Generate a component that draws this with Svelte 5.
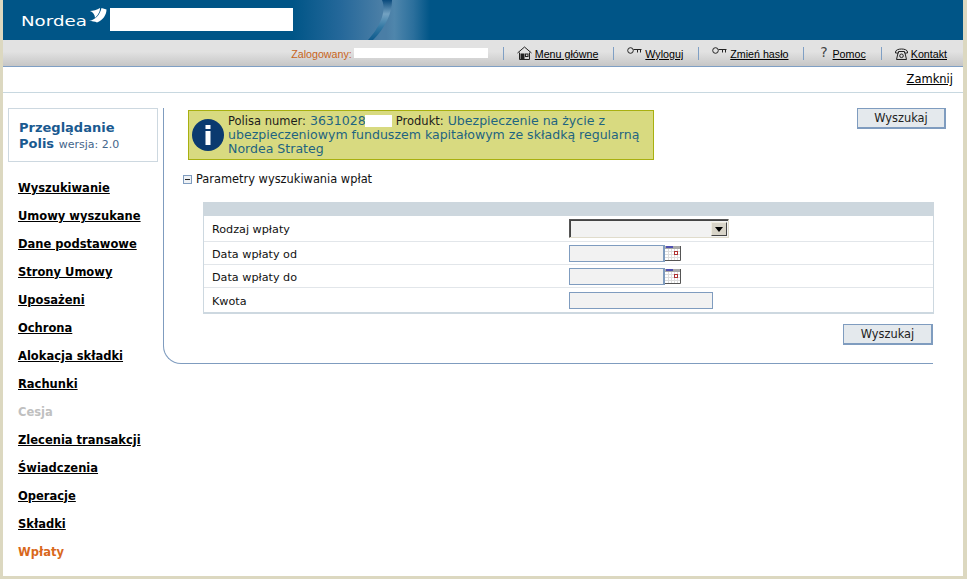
<script>
  const links = [
    { label: 'Menu główne', icon: 'home' },
    { label: 'Wyloguj', icon: 'key' },
    { label: 'Zmień hasło', icon: 'key' },
    { label: 'Pomoc', icon: 'help' },
    { label: 'Kontakt', icon: 'phone' }
  ];
  const menu = [
    'Wyszukiwanie', 'Umowy wyszukane', 'Dane podstawowe', 'Strony Umowy', 'Uposażeni',
    'Ochrona', 'Alokacja składki', 'Rachunki', 'Cesja', 'Zlecenia transakcji',
    'Świadczenia', 'Operacje', 'Składki', 'Wpłaty'
  ];
</script>

<div class="page">
  <header class="banner">
    <div class="logo">
      <span class="logo-text">Nordea</span>
      <svg class="sail" width="18" height="15" viewBox="0 0 18 15">
        <path d="M1 3 C4 3 8 2 11 0 C11 3 10 6 6 10 C6 7 4 4 1 3Z" fill="#fff" />
        <path d="M12.5 0 L17.5 1.5 C17.5 7 14 12 8 14.5 C6 13.5 3 13 0 13 C6 12 11 7 12.5 0Z" fill="#fff" />
      </svg>
    </div>
    <div class="blank-name"></div>
    <div class="swoosh">
      <svg width="137" height="40" viewBox="0 0 137 40">
        <defs>
          <linearGradient id="curve" x1="0" y1="0" x2="0" y2="1">
            <stop offset="0" stop-color="#0a4a7c" />
            <stop offset="0.35" stop-color="#74a2c2" />
            <stop offset="0.7" stop-color="#2f76a2" />
            <stop offset="1" stop-color="#0f5a8c" />
          </linearGradient>
        </defs>
        <path d="M89 0 L99 0 C99 14 92 28 80 40 L75 40 C86 28 94 12 89 0Z" fill="url(#curve)" />
      </svg>
    </div>
  </header>

  <nav class="topbar">
    <span class="user">Zalogowany:</span>
    <span class="blank-user"></span>
    {#each links as link}
      <span class="sep"></span>
      <span class="top-item">
        {#if link.icon === 'home'}
          <svg width="15" height="14" viewBox="0 0 15 14" fill="none" stroke="#222" stroke-width="1">
            <path d="M0.5 7 L7.5 1 L14.5 7" />
            <path d="M2.5 6.5 V13.5 H12.5 V6.5" />
            <rect x="4" y="8" width="3" height="5.5" fill="#222" />
            <rect x="8.5" y="8" width="2.5" height="2.5" />
          </svg>
        {:else if link.icon === 'key'}
          <svg class="raised" width="15" height="7" viewBox="0 0 15 7" fill="none" stroke="#222" stroke-width="1">
            <circle cx="3.5" cy="3.5" r="2.8" />
            <path d="M6.5 2.5 H14.5 M10.5 2.5 V5.5 M13.5 2.5 V5.5" />
          </svg>
        {:else if link.icon === 'help'}
          <span class="help">?</span>
        {:else}
          <svg width="13" height="13" viewBox="0 0 13 13" fill="none" stroke="#222" stroke-width="1">
            <path d="M0.5 5 C0.5 1 12.5 1 12.5 5 L12.5 6 H9.5 V4.5 H3.5 V6 H0.5Z" />
            <path d="M3 6 L1.5 12.5 H11.5 L10 6" />
            <circle cx="6.5" cy="8.8" r="1.8" />
          </svg>
        {/if}
        <a href="#top">{link.label}</a>
      </span>
    {/each}
  </nav>

  <div class="closebar"><a href="#top">Zamknij</a></div>

  <div class="body">
    <aside class="sidebar">
      <div class="app-title">
        <div>Przeglądanie</div>
        <div>Polis <small>wersja: 2.0</small></div>
      </div>
      <ul class="menu">
        {#each menu as item}
          <li>
            {#if item === 'Cesja'}
              <span class="disabled">{item}</span>
            {:else if item === 'Wpłaty'}
              <span class="current">{item}</span>
            {:else}
              <a href="#top">{item}</a>
            {/if}
          </li>
        {/each}
      </ul>
    </aside>

    <main class="content">
      <div class="top-row">
        <div class="info">
          <svg class="info-icon" width="32" height="32" viewBox="0 0 32 32">
            <circle cx="16" cy="16" r="16" fill="#0b3a6f" />
            <rect x="13.5" y="6" width="5" height="4" fill="#fff" />
            <rect x="13.5" y="12" width="5" height="14" fill="#fff" />
          </svg>
          <div class="info-text">
            <div class="line">
              <span class="k">Polisa numer:</span>
              <span class="v">3631028</span>
              <span class="blank-no"></span>
              <span class="k">Produkt:</span>
              <span class="v">Ubezpieczenie na życie z</span>
            </div>
            <div class="line">ubezpieczeniowym funduszem kapitałowym ze składką regularną</div>
            <div class="line">Nordea Strateg</div>
          </div>
        </div>
        <button class="btn top-btn">Wyszukaj</button>
      </div>

      <div class="section-title">
        <span class="collapse"></span>
        Parametry wyszukiwania wpłat
      </div>

      <div class="form">
        <div class="form-head"></div>
        <div class="row first">
          <label for="rodzaj">Rodzaj wpłaty</label>
          <div id="rodzaj" class="select"><span class="arrow"></span></div>
        </div>
        <div class="row">
          <label for="od">Data wpłaty od</label>
          <input id="od" class="date" />
          {@render calendar()}
        </div>
        <div class="row">
          <label for="do">Data wpłaty do</label>
          <input id="do" class="date" />
          {@render calendar()}
        </div>
        <div class="row last">
          <label for="kwota">Kwota</label>
          <input id="kwota" class="amount" />
        </div>
      </div>

      <div class="actions"><button class="btn">Wyszukaj</button></div>
    </main>
  </div>
</div>

{#snippet calendar()}
  <svg class="cal" width="16" height="15" viewBox="0 0 16 15">
    <rect width="16" height="15" fill="#fff" />
    <rect x="0" y="0" width="15" height="3" fill="#a9a9a9" />
    <rect x="1" y="0" width="7" height="2" fill="#4f4fb0" />
    <path d="M3.5 3 V14 M6.5 3 V14 M9.5 3 V14 M12.5 3 V14 M0 5.5 H15 M0 8.5 H15 M0 11.5 H15" stroke="#ddd" stroke-width="1" />
    <rect x="9.5" y="5.5" width="3" height="3" fill="#fff" stroke="#b03030" />
    <path d="M15.5 0 V14.5 H0" fill="none" stroke="#555" stroke-width="1" />
  </svg>
{/snippet}

<style>
  :global(body) {
    margin: 0;
    background: #dcd8c0;
  }

  a {
    color: #000;
  }

  .page {
    width: 960px;
    height: 576px;
    margin-left: 3px;
    overflow: hidden;
    background: #fff;
    font-family: "DejaVu Sans", Verdana, sans-serif;
    font-size: 11px;
    color: #111;
  }

  .banner {
    display: flex;
    align-items: flex-start;
    height: 40px;
    background: #005587;
  }

  .logo {
    display: flex;
    align-items: flex-start;
    width: 107px;
    height: 40px;
    padding-left: 18px;
    box-sizing: border-box;
    color: #fff;
  }

  .logo-text {
    display: block;
    width: 68px;
    margin-top: 12px;
    font-size: 14px;
    line-height: 18px;
    transform: scaleX(1.3);
    transform-origin: left center;
  }

  .sail {
    flex: none;
    margin-top: 8px;
  }

  .blank-name {
    width: 183px;
    height: 23px;
    margin-top: 8px;
    background: #fff;
  }

  .swoosh {
    width: 137px;
    height: 40px;
    background: linear-gradient(90deg, #005587 0%, #25689a 35%, #4a7ea6 64%, #4a7ea6 68%, #4f86ac 74%, #2b6f9c 88%, #005587 100%);
  }

  .swoosh svg {
    display: block;
  }

  .topbar {
    display: flex;
    align-items: center;
    justify-content: flex-end;
    height: 26px;
    padding: 0 16px 0 0;
    border-bottom: 1px solid #7f9fc4;
    background: linear-gradient(180deg, #e2e2e2 0%, #e2e2e2 45%, #c6c6c6 100%);
    font-family: "Liberation Sans", Arial, sans-serif;
    font-size: 10.7px;
  }

  .user {
    margin-top: 1px;
    color: #c8641a;
  }

  .blank-user {
    width: 134px;
    height: 10px;
    margin-left: 2px;
    background: #fff;
  }

  .sep {
    width: 1px;
    height: 13px;
    margin: 0 13px 0 15px;
    background: #7f9fc4;
  }

  .top-item {
    display: flex;
    align-items: center;
    gap: 3px;
    height: 16px;
  }

  .top-item a {
    margin-top: 2px;
  }

  .raised {
    margin-top: -5px;
  }

  .help {
    width: 11px;
    margin: -3px 0 0 1px;
    font-family: "DejaVu Sans", sans-serif;
    font-size: 14px;
    line-height: 16px;
    text-align: center;
    color: #444;
  }

  .closebar {
    display: flex;
    justify-content: flex-end;
    height: 25px;
    padding-right: 10px;
    border-bottom: 1px solid #c8d8e0;
    line-height: 25px;
    font-size: 11.5px;
  }

  .body {
    display: flex;
  }

  .sidebar {
    flex: none;
    width: 155px;
    padding: 15px 0 0 5px;
    box-sizing: border-box;
  }

  .app-title {
    height: 54px;
    width: 150px;
    box-sizing: border-box;
    padding: 11px 0 0 10px;
    border: 1px solid #cdd8e0;
    color: #1a5a90;
    font-size: 13px;
    font-weight: bold;
    line-height: 16px;
  }

  .app-title small {
    color: #44658a;
    font-size: 11px;
    font-weight: normal;
  }

  .menu {
    margin: 12px 0 0;
    padding: 0;
    list-style: none;
    font-weight: bold;
    font-size: 11.5px;
  }

  .menu li {
    height: 28px;
    padding-left: 10px;
    line-height: 28px;
  }

  .disabled {
    color: #c0c0c0;
  }

  .current {
    color: #d9681c;
  }

  .content {
    flex: none;
    width: 770px;
    height: 256px;
    margin: 15px 0 0 5px;
    padding: 0 0 0 24px;
    box-sizing: border-box;
    border-left: 1px solid #7f9cbf;
    border-bottom: 1px solid #7f9cbf;
    border-bottom-left-radius: 18px;
  }

  .top-row {
    display: flex;
    justify-content: space-between;
    align-items: flex-start;
    margin-right: -13px;
  }

  .info {
    display: flex;
    gap: 4px;
    align-items: center;
    width: 466px;
    height: 50px;
    margin-top: 2px;
    padding-left: 3px;
    box-sizing: border-box;
    border: 1px solid #a8b010;
    background: #d8da80;
    color: #1e6480;
    font-size: 12.55px;
    line-height: 14px;
  }

  .info-icon {
    flex: none;
  }

  .line {
    display: flex;
    align-items: baseline;
    gap: 4px;
    white-space: nowrap;
  }

  .k {
    color: #1c1c1c;
    font-size: 11.5px;
  }

  .blank-no {
    width: 27px;
    height: 12px;
    margin: 0 0 0 -5px;
    align-self: center;
    background: #fff;
  }

  .btn {
    width: 90px;
    height: 21px;
    padding: 0;
    border: 1px solid #7f9cbf;
    border-right-width: 2px;
    border-bottom-width: 2px;
    background: #e4e9ed;
    font-family: "DejaVu Sans", Verdana, sans-serif;
    font-size: 11.4px;
    color: #222;
  }

  .top-btn {
    width: 89px;
  }

  .section-title {
    display: flex;
    align-items: center;
    gap: 4px;
    margin: 12px 0 0 -5px;
    font-size: 11.4px;
    line-height: 15px;
  }

  .collapse {
    position: relative;
    width: 7px;
    height: 7px;
    border: 1px solid #7f9cbf;
    background: #eef1f4;
  }

  .collapse::after {
    content: "";
    position: absolute;
    left: 1px;
    right: 1px;
    top: 3px;
    height: 1px;
    background: #222;
  }

  .form {
    width: 731px;
    margin: 15px 0 0 15px;
    box-sizing: border-box;
    border: solid #cdd8e0;
    border-width: 0 1px 2px;
  }

  .form-head {
    height: 14px;
    margin: 0 -1px;
    background: #cdd7de;
  }

  .row {
    display: flex;
    align-items: center;
    height: 23px;
    box-sizing: border-box;
    border-bottom: 1px solid #e2e6ea;
  }

  .row.first {
    height: 26px;
  }

  .row.last {
    height: 24px;
    border-bottom: none;
  }

  .row label {
    width: 365px;
    padding: 2px 0 0 8px;
    box-sizing: border-box;
    font-size: 11.2px;
  }

  .select {
    display: flex;
    justify-content: flex-end;
    width: 160px;
    height: 19px;
    box-sizing: border-box;
    padding: 2px 1px 1px 0;
    border: 1px solid;
    border-color: #555 #e0dccc #e0dccc #555;
    box-shadow: inset 1px 1px 0 #444;
    background: #f2f2f2;
  }

  .arrow {
    position: relative;
    width: 16px;
    box-sizing: border-box;
    border: 1px solid;
    border-color: #efece0 #444 #444 #efece0;
    background: #d8d4c8;
  }

  .arrow::after {
    content: "";
    position: absolute;
    left: 3px;
    top: 4px;
    border: 4px solid transparent;
    border-top: 5px solid #000;
    border-bottom: none;
  }

  input {
    height: 17px;
    padding: 0;
    box-sizing: border-box;
    border: 1px solid #7f9cbf;
    background: #f2f2f2;
  }

  .date {
    width: 96px;
    border-right-width: 2px;
  }

  .amount {
    width: 144px;
  }

  .actions {
    display: flex;
    justify-content: flex-end;
    margin: 10px 0 0;
  }
</style>
